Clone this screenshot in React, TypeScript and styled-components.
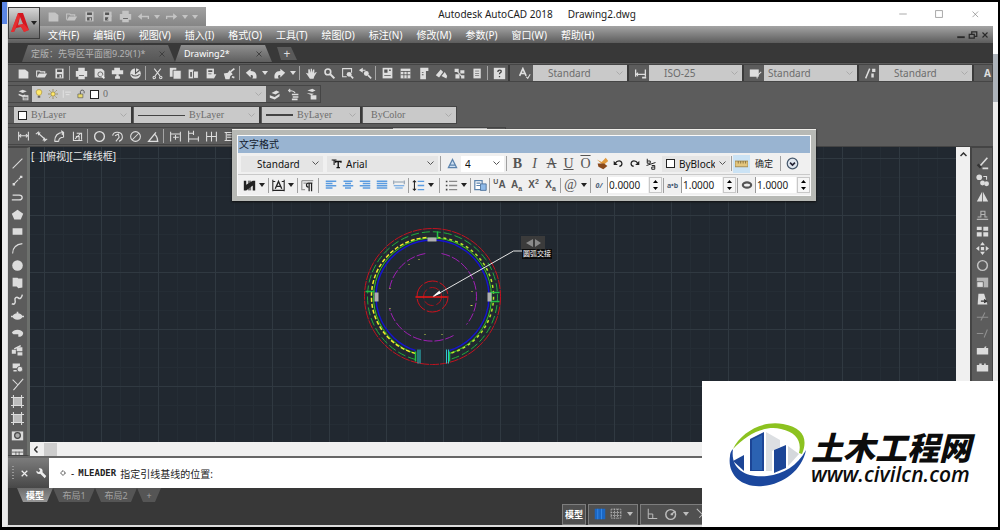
import React from 'react';
import styled, { createGlobalStyle, css } from 'styled-components';

const GlobalStyle = createGlobalStyle`
  * { box-sizing: border-box; }
  body { margin: 0; background: #000; font-family: "Noto Sans", "Noto Sans CJK SC", sans-serif; font-size: 10px; }
  button, input, select { font: inherit; color: inherit; margin: 0; padding: 0; border: 0; background: none; }
  h1, h2 { margin: 0; font-weight: 400; }
`;

/* ---------- icons ---------- */
const S = { fill: 'none', stroke: 'currentColor', strokeWidth: 1.3 } as const;
const F = { fill: 'currentColor' } as const;
const H = { fill: '#555' } as const;

const glyphs: Record<string, React.ReactNode> = {
  new: <path {...F} d="M2 3h8l4 3v8H2z" />,
  open: <><path {...S} d="M2 12V5h4l1 1h5v2" /><path {...F} d="M2 13l3-5h10l-3 5z" /></>,
  save: <><path {...F} d="M3 2h10v12H3z" /><path {...H} d="M5 3h6v3H5zM5 9h6v4H5z" /><path {...F} d="M8 10h2v3H8z" /></>,
  saveAs: <><path {...F} d="M3 2h10v12H3z" /><path {...H} d="M5 3h5v3H5zM5 9h4v4H5z" /><path {...S} d="M8 12l5-5" /></>,
  print: <><path {...F} d="M4 1h8v4H4zM1 5h14v7h-3v3H4v-3H1z" /><path {...H} d="M5 10h6v1H5z" /></>,
  preview: <><path {...F} d="M2 2h9l3 3v8H2z" /><circle cx="9" cy="9" r="3" fill="#ddd" stroke="#555" /><path d="M11 11l3 3" stroke="#eee" strokeWidth="2" /></>,
  publish: <><path {...F} d="M4 1h7v3h4v5H1V4h3z" /><path {...S} d="M8 9v5M5 13h6" strokeWidth="3" /></>,
  globe: <><circle {...F} cx="8" cy="8" r="6.500" /><path d="M8 1v7l5-4M3 9c3 3 6 3 10 0" stroke="#555" fill="none" strokeWidth="1.3" /></>,
  cut: <><path {...S} d="M4 2l7 9M12 2L5 11" /><circle {...S} cx="4" cy="13" r="1.5" /><circle {...S} cx="12" cy="13" r="1.5" /></>,
  copy: <><path {...F} d="M1 1h8v11H1z" /><path d="M5 4h10v11H5z" fill="currentColor" stroke="#555" /></>,
  paste: <><path {...F} d="M2 3h6v11H2z" /><path d="M8 5h6v9H8z" fill="currentColor" stroke="#555" /><path {...H} d="M4 6h2v6H4z" /></>,
  pasteSpec: <><path {...F} d="M2 2h9v12H2z" /><path {...H} d="M4 4h5v2H4zM4 8h4v1H4z" /><path {...F} d="M8 9h6l-3 5z" /></>,
  brush: <><path {...F} d="M1 8l5-1 2-3 4 5-3 2-1 4H3z" /><path {...S} d="M9 6l5-4M11 12l3 1" strokeWidth="2.2" /></>,
  undo: <path {...F} d="M1 7l6-5v3c6 0 8 4 7 9H9c2-3 0-5-2-4v3z" />,
  redo: <path {...F} d="M15 7L9 2v3c-6 0-8 4-7 9h5c-2-3 0-5 2-4v3z" />,
  undoThin: <><path {...S} d="M3 8c3-5 9-5 10 0 0 3-2 4-4 4" strokeWidth="1.800" /><path {...F} d="M1 4v6h6z" /></>,
  redoThin: <><path {...S} d="M13 8c-3-5-9-5-10 0 0 3 2 4 4 4" strokeWidth="1.800" /><path {...F} d="M15 4v6H9z" /></>,
  arrowL: <><path {...S} d="M4 8h10v3" strokeWidth="1.600" /><path {...F} d="M1 8l5-4v8z" /></>,
  arrowR: <><path {...S} d="M12 8H2v3" strokeWidth="1.600" /><path {...F} d="M15 8l-5-4v8z" /></>,
  pan: <path {...F} d="M1 7l3 1V3l1.500-.5L7 7V2h1.500l.5 5 1-4h1.500v5l2-2 1 .5-3 5-1 3H6z" />,
  zoom: <><circle {...S} cx="6" cy="6" r="3.500" strokeWidth="2" /><path {...S} d="M9 9l5 5" strokeWidth="2.500" /></>,
  zoomWin: <><path {...S} d="M13 7V2H2v10h5" /><circle {...F} cx="10" cy="9" r="3" /><path {...S} d="M12 11l3 3" strokeWidth="2" /></>,
  zoomPrev: <><path {...S} d="M1 4h7M1 4l3-2v4z" /><circle {...F} cx="9" cy="8" r="3" /><path {...S} d="M11 10l4 4" strokeWidth="2" /></>,
  props: <><path {...F} d="M2 1h12v13H2z" /><path {...H} d="M4 3h4v4H4zM10 3h2v2h-2zM4 10h8v1H4z" /></>,
  dcenter: <><path {...F} d="M2 2h12v12H2z" /><path stroke="#555" d="M2 5.500h12M6 5v9M10 5v9M2 9.500h12" /></>,
  palettes: <><path {...F} d="M4 1h10v4h-3v10H4z" /><path {...H} d="M6 6h2v1H6zM6 9h2v1H6z" /></>,
  sheets: <><path {...F} d="M1 10l6-7 3 3-5 7zM8 11l4-5 3 5-1 3z" /></>,
  markup: <><path {...F} d="M2 2h5v4H2zM9 4h5v4H9zM3 9h5v5H3zM10 10h4v4h-4z" /><path {...S} d="M5 5l6 7" /></>,
  calc: <><path {...F} d="M3 2h9v12H3z" /><path stroke="#777" d="M5 5h5M5 8h5M5 10.500h5" /></>,
  help: <><path {...F} d="M1 1h14v14H1z" /><path d="M6 6c0-3 5-3 4 0-.5 1-2 1-2 3M8 11v1.500" stroke="#444" strokeWidth="1.600" fill="none" /></>,
  textStyle: <><path {...S} d="M2 11L6 2l4 9M4 8h4" strokeWidth="2" /><path {...S} d="M10 12l2 2 3-5" /></>,
  dimStyle: <><path {...S} d="M2 3v9M14 3v9M2 9h12" strokeWidth="1.600" /><path {...F} d="M5 6v6L2 9zM10 12h5v2h-5z" /></>,
  tableStyle: <><path {...F} d="M1 3h11v9H1z" /><path {...S} d="M10 11l5-5M10 8v6" /></>,
  leaderStyle: <><path {...S} d="M2 14L7 2" strokeWidth="1.800" /><path {...F} d="M10 2h4v4h-4zM9 8h3v5H9z" /></>,
  layers: <><path {...F} d="M2 4l5-2 5 2-5 2zM2 7l5 2 3-1v2l-3 1-5-2zM7 9h7v6H7z" /><path stroke="#555" d="M8 11.500h5M8 13.500h5" /></>,
  layerCur: <><path {...F} d="M3 6l6-3 4 2-5 3zM1 9l6 2 6-4v3l-6 4-6-2z" /></>,
  layerPrev: <><path {...F} d="M6 7h8v2H6zM7 10h7v2H7zM6 13h7v2H6z" /><path {...S} d="M10 6C8 3 6 3 2 3M4 1L2 3l2 2" /></>,
  layerState: <><path {...F} d="M3 3l6-2 4 2-4 2zM2 6l9 1-3 2zM7 9h7v5H7z" /></>,
  dLinear: <><path {...S} d="M2 2v11M14 2v11M3 7h10" /><path {...S} d="M5 5L3 7l2 2M11 5l2 2-2 2" /></>,
  dAligned: <><path {...S} d="M1 5l4-3M11 14l4-3M4 4l9 8" /><path {...F} d="M3 3h4L4 7zM13 13h-4l3-4z" /></>,
  dArc: <><path {...S} d="M2 14C2 7 6 3 13 3M7 14c0-3 2-5 6-5M10 1l3 2-2 3M13 3v6M2 14h5" /></>,
  dOrd: <><path {...S} d="M3 2v11h11M5 11l7-7M7 4h6v8M6 8h4v5" /></>,
  circle: <circle {...S} cx="8" cy="8" r="6" strokeWidth="1.700" />,
  dJog: <><path {...S} d="M2 7c1-6 12-6 12 2 0 2-1 4-4 5M5 7l4-2 1 4-4 5" /></>,
  dDia: <><circle {...S} cx="8" cy="8" r="6" /><path {...S} d="M4 12l8-8" /></>,
  dAng: <><path {...S} d="M14 14H2L11 3M9 5c3 2 4 5 4 9" strokeWidth="1.600" /></>,
  dQuick: <><path {...S} d="M2 2v3h12V2M2 5v9M14 5v9M5 9h7M8 6v6" /></>,
  dBase: <><path {...S} d="M2 1v14M8 1v5M14 8v6M2 4h6M2 11h12" /></>,
  dCont: <><path {...S} d="M2 2v12M8 2v12M14 2v12M2 8h12" /></>,
  dSpace: <><path {...S} d="M2 3h12M2 13h12M4 3v10M12 3v10M5 6h6M5 9h6" /></>,
  line: <path {...S} d="M2 14L14 2" />,
  xline: <><path {...S} d="M3 13L13 3" strokeDasharray="8 1" /><path {...F} d="M2 11h3v3H2zM11 2h3v3h-3z" /></>,
  pline: <path {...S} d="M2 5h8c5 0 5 6 0 6H1" strokeWidth="1.600" />,
  polygon: <path {...F} d="M8 2l7 5-3 7H4L1 7z" />,
  rect: <path {...F} d="M2 4h12v8H2z" />,
  arc: <path {...S} d="M2 14C2 8 6 3 14 2" />,
  disc: <circle {...F} cx="8" cy="8" r="6.500" />,
  cloud: <path {...F} d="M2 2h6l1 1h5v11l-5 1-2-2H2z" />,
  spline: <path {...S} d="M1 13c3 2 5-1 4-4s2-5 4-3 4 0 5-4" strokeWidth="1.800" />,
  ellipse: <><ellipse {...F} cx="8" cy="8" rx="6" ry="4" /><path {...F} d="M0 7h3v2H0zM13 7h3v2h-3zM7 2h2v3H7z" /></>,
  ellArc: <path {...F} d="M1 7c2-5 12-5 14 0 0 4-3 5-6 5V9H3z" />,
  insert: <><path {...F} d="M7 4h7v5H7zM8 10h6v4H8zM1 7h5v5H1z" /><path {...S} d="M4 6l8-4" strokeWidth="2" /></>,
  block: <><path {...F} d="M2 3h9v6H2zM3 11h4v2H3z" /><circle cx="11" cy="10" r="3.500" fill="currentColor" stroke="#555" /></>,
  point: <path {...S} d="M2 2l6 6M15 1L3 15" />,
  hatch: <><path {...F} d="M3 3h10v10H3z" opacity=".75" /><path {...S} d="M3 0v16M13 0v16M0 3h16M0 13h16" /></>,
  region: <><path {...F} d="M1 3h14v11H1z" /><circle cx="8" cy="8" r="3.500" fill="#aaa" stroke="#444" strokeWidth="1.500" /></>,
  table: <><path {...F} d="M1 4h14v11H1z" /><path stroke="#555" d="M1 7.500h14M6 7v8M10 7v8" /></>,
  erase: <><path {...S} d="M5 11L14 1M8 14h7" strokeWidth="2" /><path d="M2 9l4 4" stroke="#333" strokeWidth="3" /></>,
  mCopy: <><circle {...F} cx="4" cy="4" r="3.500" /><circle {...F} cx="8" cy="11" r="3" /><circle {...F} cx="13" cy="12" r="3" /><path {...S} d="M9 3h4v4" /></>,
  mirror: <path {...F} d="M7.500 1v12H1zM8.500 1v12H15z" />,
  offset: <path {...S} opacity=".7" d="M1 14h14M2 11h4V4h5v7h3M6 8h5" />,
  array: <path {...F} d="M1 2h6v4H1zM9 2h6v5H9zM1 9h6v5H1zM9 9h6v5H9z" />,
  move: <path {...F} d="M8 0l3 4H5zM8 16l3-4H5zM0 8l4-3v6zM16 8l-4-3v6zM6 6h4v4H6z" />,
  rotate: <circle {...S} cx="8" cy="8" r="6" strokeWidth="1.800" opacity=".8" />,
  scale: <><path {...F} d="M1 2h14v12H1z" opacity=".7" /><path {...F} stroke="#555" d="M1 7h8v7H1z" /></>,
  stretch: <><path {...F} d="M3 1h7l4 13H2z" /><path d="M6 10h7M10 8l3 2-3 2" stroke="#333" fill="none" strokeWidth="1.500" /></>,
  trim: <path {...S} opacity=".4" d="M1 9h14M6 13l5-10" />,
  extend: <path {...S} opacity=".4" d="M1 8h8M10 13l4-10" />,
  breakAt: <path {...F} d="M1 5h9l1-2h2l-1 2h3v8H1z" />,
  breakIt: <path {...F} d="M1 5h3V3h3v2h3V3h2v2h3v8H1z" />,
  wrench: <path {...F} d="M2 5l3 2 2-2-2-3c3-1 6 1 5 5l5 5-2 3-6-6C4 10 1 8 2 5z" />,
  gear: <><circle {...S} cx="8" cy="8" r="4" strokeDasharray="2 1" strokeWidth="2" /></>,
  close: <path {...S} d="M3 3l10 10M13 3L3 13" strokeWidth="2.200" />,
  thinX: <path {...S} d="M4 4l9 9M13 4l-9 9" strokeWidth="1" />,
  tabX: <path d="M3 3l10 10M13 3L3 13" stroke="#3c3c3c" strokeWidth="1.800" />,
  minimize: <path {...S} d="M2 8h12" strokeWidth="1" />,
  maximize: <path {...S} d="M2.500 2.500h11v11h-11z" strokeWidth="1" />,
  docMin: <path {...F} d="M2 10h12v3H2z" />,
  docRestore: <path {...S} d="M2 7h8v6H2zM6 7V3h8v7h-4" strokeWidth="2" />,
  bulb: <><path d="M8 1c6 0 5 6 2 9H6C3 7 2 1 8 1z" fill="#ffe96b" stroke="#a08420" /><path d="M6 11h4v3H6z" fill="#666" /></>,
  sun: <><circle cx="8" cy="8" r="3.500" fill="#ffe96b" stroke="#7b6a2a" /><path d="M8 0v3M8 13v3M0 8h3M13 8h3M2 2l2 2M12 12l2 2M2 14l2-2M12 4l2-2" stroke="#7b6a2a" /></>,
  freeze: <path d="M2 2v12M5 5h9M6 9h6" stroke="#e4e4e4" fill="none" strokeWidth="1.500" />,
  lock: <><path d="M3 8h8v6H3z" fill="#e8d96a" stroke="#555" /><path d="M7 8V4c0-3 6-3 6 0v3" stroke="#555" fill="none" strokeWidth="1.500" /></>,
  tt: <><path {...S} d="M1 3h7M4.500 3v7" strokeWidth="1.500" /><path {...S} d="M6 5h9M10.500 5v9M8 14h5M6.500 4v3M14.500 4v3" strokeWidth="2" /></>,
  annot: <path d="M8 3l5 10H3zM5 10h6" fill="#cfe0f2" stroke="#5b83ad" strokeWidth="1.600" />,
  stamp: <><path d="M1 3l6 3 5-5 3 4-6 5z" fill="#e09a3e" /><path d="M2 8h8l4 3-5 4-6-3z" fill="#8a4a1c" /></>,
  stack: <><path {...S} d="M3 1v6h4V4H3M2 10L14 6M9 10h4v5H9v-3h4" /></>,
  ruler: <><path d="M0 5h16v7H0z" fill="#e3c67e" stroke="#9b8144" /><path d="M4 5v3M7 5v3M10 5v3M13 5v3" stroke="#7a6432" /></>,
  more: <><circle cx="8" cy="8" r="6.500" fill="#dfe6ee" stroke="#46586c" strokeWidth="1.500" /><path d="M5 7l3 3 3-3" stroke="#223" fill="none" strokeWidth="2" /></>,
  columns: <><path {...F} d="M1 2h3v12H1zM12 2h3v12h-3zM4 7l8-5v6l-8 6z" /><path {...F} opacity=".6" d="M6 2h4v12H6z" /></>,
  aBox: <><path {...S} d="M1 1v14M15 1v14M1 3h3M12 3h3M1 14h14" /><path {...S} d="M4 12L8 3l4 9M6 9h4" strokeWidth="1.600" /></>,
  para: <><path d="M1 2h14M1 2v11h4M3 5h4" stroke="#999" fill="none" strokeWidth="1.500" /><path {...S} d="M14 5H9c-3 0-3 5 0 5M10 5v10M13 5v10" strokeWidth="1.500" /></>,
  alignL: <path d="M1 3h14M1 6h9M1 9h14M1 12h9" stroke="#5a9be0" strokeWidth="2" />,
  alignC: <path d="M2 3h12M4 6h8M1 9h14M4 12h8" stroke="#5a9be0" strokeWidth="2" />,
  alignR: <path d="M1 3h14M5 6h10M1 9h14M5 12h10" stroke="#5a9be0" strokeWidth="2" />,
  alignJ: <path d="M1 3h14M1 6h14M1 9h14M1 12h14" stroke="#5a9be0" strokeWidth="1.800" />,
  distrib: <><path d="M1 2v5M15 2v5M2 4h12" stroke="#8899aa" strokeWidth="1.400" /><path d="M1 9h14M3 12h10" stroke="#5a9be0" strokeWidth="1.600" /></>,
  spacing: <><path {...S} d="M3 2v12M1 4l2-2 2 2M1 12l2 2 2-2" /><path d="M7 3h8M7 8h8M7 13h8" stroke="#5a9be0" strokeWidth="1.600" /></>,
  numbering: <><path d="M1 3h2M1 8h2M1 13h2" stroke="#444" strokeWidth="2" /><path d="M5 3h10M5 8h10M5 13h10" stroke="#8a8a8a" strokeWidth="1.600" /></>,
  field: <><path d="M1 2h9v11H1zM3 5h5M3 8h5" fill="#fff" stroke="#5b83ad" strokeWidth="1.500" /><path d="M8 6h7v8H8z" fill="#8db9e8" stroke="#456a92" /></>,
  widthF: <ellipse cx="8" cy="8" rx="5.500" ry="3.500" fill="none" stroke="#555" strokeWidth="3" />,
  grid: <><path d="M1 1h14v14H1z" fill="#1b67c4" /><path d="M5 1v14M10 1v14" stroke="#3f92f0" /></>,
  snap: <path {...S} strokeDasharray="2 1" strokeWidth="1" d="M1.500 1.500h13v12h-13zM6 1v13M10 1v13M1 6h14M1 10h14" />,
  ortho: <path {...S} d="M3 1v13h12M3 8h6v6" />,
  polar: <><circle {...S} cx="7" cy="8" r="6" strokeWidth="1.800" /><path {...S} d="M7 8l6-4M7 8h3" strokeWidth="1.800" /></>,
  iso: <path {...S} d="M1 1l14 14M9 0v16M14 2L4 12" />,
};

const Svg = styled.svg`display: block; flex: none;`;
const Icon = ({ name, size = 14 }: { name: string; size?: number }) => (
  <Svg width={size} height={size} viewBox="0 0 16 16" aria-hidden="true">{glyphs[name]}</Svg>
);
const Tri = styled.span`
  width: 0; height: 0; flex: none;
  border: 3px solid transparent; border-top: 4px solid currentColor; border-bottom: 0;
`;

/* ---------- frame ---------- */
const Screen = styled.div`
  position: relative; display: flex; min-height: 100vh;
  border: 2px solid #000; border-bottom-width: 3px; overflow: hidden;
`;
const Edge = styled.div<{ $side: 'left' | 'right' }>`
  flex: none;
  ${p => p.$side === 'left'
    ? css`width: 5px; background: linear-gradient(#5b86e5 22px, #ebebeb 22px);`
    : css`width: 5px; background: linear-gradient(#fff 52px, #adb3ba 52px 100px, #ececec 100px);`}
`;
const Win = styled.div`
  flex: 1; min-width: 0; display: flex; flex-direction: column;
  background: #5c5c5c; border-left: 1px solid #ddd; border-bottom: 2px solid #ddd; position: relative;
`;
const TitleBar = styled.header`
  height: 24px; background: #fff; display: flex; align-items: center; position: relative;
`;
const Title = styled.h1`
  flex: 1; display: flex; justify-content: center; gap: 15px; padding-right: 28px;
  font-size: 10px; line-height: 24px; color: #1c1c1c; white-space: pre;
`;
const QuickBar = styled.div`
  width: 167px; height: 19px; margin: 5px 0 0 31px; padding-left: 5px; align-self: flex-start;
  display: flex; align-items: center; background: linear-gradient(#a2a2a2, #858585); color: #c4c4c4;
`;
const WinBtns = styled.div`display: flex; gap: 22px; color: #777; margin-right: 11px;`;
const AppButton = styled.button`
  position: absolute; left: 0; top: 5px; width: 32px; height: 32px; z-index: 2;
  border: 1px solid #3c3c3c; background: linear-gradient(#d6d6d6, #6a6a6a);
  display: flex; align-items: center; color: #222;
`;
const MenuBar = styled.nav`
  height: 17px; padding-left: 40px; display: flex; align-items: center; gap: 14px;
  background: linear-gradient(#a4a4a4, #5c5c5c); color: #fff;
`;
const MenuItem = styled.button`line-height: 16px; white-space: nowrap; font-size: 10px;`;
const DocBtns = styled.div`margin-left: auto; display: flex; color: #2a2a2a; padding-right: 2px;`;

const TabStrip = styled.div`
  height: 20px; background: #383838; border-bottom: 1px solid #333; display: flex; align-items: flex-end; padding-left: 14px;
`;
const DocTab = styled.button<{ $active?: boolean; $w: number }>`
  width: ${p => p.$w}px; height: 17px; padding: 0 9px; display: flex; align-items: center; justify-content: space-between;
  font-size: 9px; white-space: nowrap;
  color: ${p => (p.$active ? '#fff' : '#b4b4b4')};
  background: ${p => (p.$active ? 'linear-gradient(#8f8f8f, #5f5f5f)' : 'linear-gradient(#6a6a6a, #565656)')};
  clip-path: polygon(0 100%, 6px 0, calc(100% - 7px) 0, 100% 100%);
`;
const PlusTab = styled.button`
  width: 20px; height: 13px; margin: 0 0 2px 5px; background: #5a5a5a; color: #ddd; font-size: 12px; line-height: 12px;
  clip-path: polygon(0 0, 14px 0, 100% 100%, 4px 100%);
`;

/* ---------- toolbars ---------- */
const Toolbars = styled.div`display: flex; flex-direction: column; gap: 3px; padding: 1px 0;`;
const Toolbar = styled.div<{ $fill?: boolean }>`
  height: 18px; display: flex; align-items: center; color: #dedede; overflow: hidden;
  border: 1px solid #454545; border-left: 0; padding-left: 6px;
  ${p => (p.$fill ? '' : 'align-self: flex-start;')}
`;
const ToolBtn = styled.button<{ $w?: number }>`
  width: ${p => p.$w ?? 18}px; height: 16px; flex: none; display: flex; align-items: center; justify-content: center;
`;
const Rule = styled.span`width: 1px; height: 14px; margin: 0 2px 0 1px; background: #a5a5a5; flex: none;`;
const Divider = styled.span`width: 2px; height: 18px; background: #3a3a3a; flex: none;`;
const Spacer = styled.span<{ $w: number }>`width: ${p => p.$w}px; flex: none;`;
const Combo = styled.label<{ $w: number; $pad?: number; $tone?: 'dim' | 'light' | 'white'; $serif?: boolean }>`
  width: ${p => p.$w}px; height: 16px; flex: none; display: flex; align-items: center; gap: 4px;
  padding: 0 4px 0 ${p => p.$pad ?? 4}px;
  background: ${p => ({ dim: '#c9c9c9', light: '#e5e5e5', white: '#fff' }[p.$tone ?? 'dim'])};
  color: ${p => (p.$tone && p.$tone !== 'dim' ? '#111' : '#6c6c6c')};
  font-family: ${p => (p.$serif ? '"Liberation Serif", serif' : 'inherit')};
  select { flex: 1; min-width: 0; appearance: none; outline: 0; line-height: 14px; }
`;
const Swatch = styled.span`width: 9px; height: 9px; border: 1px solid #222; background: #fff; flex: none;`;
const Stroke = styled.span<{ $w: number; $h: number }>`width: ${p => p.$w}px; height: ${p => p.$h}px; background: #444; flex: none;`;
const Chevron = ({ color = '#aaa' }: { color?: string }) => (
  <Svg width="7" height="5" viewBox="0 0 7 5" aria-hidden="true"><path d="M.5.5l3 3 3-3" fill="none" stroke={color} /></Svg>
);
interface ComboProps { label: string; value: string; w: number; pad?: number; tone?: 'dim' | 'light' | 'white'; serif?: boolean; children?: React.ReactNode }
const ComboBox = ({ label, value, w, pad, tone, serif, children }: ComboProps) => (
  <Combo $w={w} $pad={pad} $tone={tone} $serif={serif}>
    {children}
    <select aria-label={label} defaultValue={value}><option>{value}</option></select>
    <Chevron color={tone ? '#555' : '#aaa'} />
  </Combo>
);
/* A run of tools: "|" draws a rule, "v" a small menu arrow. */
const Tools = ({ items, w = 18 }: { items: string[]; w?: number }) => (
  <>
    {items.map((n, i) =>
      n === '|' ? <Rule key={i} />
        : n === 'v' ? <ToolBtn key={i} $w={10} aria-label="more"><Tri /></ToolBtn>
          : <ToolBtn key={i} $w={w} aria-label={n}><Icon name={n} size={13} /></ToolBtn>)}
  </>
);

/* ---------- workspace ---------- */
const Work = styled.main`flex: 1; min-height: 0; display: flex; border-top: 1px solid #444;`;
const SideTools = styled.div<{ $right?: boolean }>`
  width: ${p => (p.$right ? 23 : 22)}px; flex: none; height: 100%; overflow: hidden; padding-top: 7px;
  display: flex; flex-direction: column; align-items: center; color: #dcdcdc;
  border: 1px solid #444; ${p => (p.$right ? 'border-left: 2px solid #444;' : 'border-right: 3px solid #6d706d; border-left: 0;')}
  button { height: 17px; }
`;
const SideWrap = styled.div`flex: none; height: 0; min-height: 100%;`;
const Center = styled.div`flex: 1; min-width: 0; display: flex; flex-direction: column;`;
const CanvasRow = styled.div`flex: 1; display: flex; min-height: 0;`;
const Canvas = styled.div`
  flex: 1; position: relative; background-color: #212830; color: #e8e8e8; overflow: hidden;
  background-image:
    linear-gradient(90deg, #303941 1px, transparent 1px), linear-gradient(#303941 1px, transparent 1px),
    linear-gradient(90deg, #252d35 1px, transparent 1px), linear-gradient(#252d35 1px, transparent 1px);
  background-size: 57px 57px, 57px 57px, 19px 19px, 19px 19px;
  background-position: 14px 0, 0 11px, 14px 0, 0 11px;
`;
const ViewLabel = styled.div`position: absolute; left: 1px; top: 2px; font-size: 10px; line-height: 14px; white-space: pre;`;
const Drawing = styled.svg`position: absolute; inset: 0; width: 100%; height: 100%;`;
const Marker = styled.div`
  position: absolute; left: 491px; top: 89px; width: 24px; height: 13px; background: #3b3b3b; color: #8a8a8a;
  display: flex; align-items: center; justify-content: center;
`;
const LeaderText = styled.div`
  position: absolute; left: 492px; top: 102px; padding: 0 1px; background: #0c0c0c; color: #fff;
  font-size: 7px; line-height: 10px; white-space: nowrap;
`;
const VScroll = styled.div`
  width: 14px; flex: none; background: #f0f0f0; color: #333; display: flex; justify-content: center; align-items: flex-start; padding-top: 5px;
`;
const HScroll = styled.div`height: 14px; background: #f0f0f0; color: #333; display: flex; align-items: center; padding-left: 4px; gap: 6px;`;
const Thumb = styled.span`width: 13px; height: 13px; background: #cdcdcd;`;

const CommandBar = styled.div`height: 32px; border-top: 2px solid #666; display: flex; background: #fff;`;
const CommandGrip = styled.div`
  width: 41px; flex: none; display: flex; align-items: center; gap: 4px; padding-left: 4px; color: #eee;
  background: linear-gradient(#7c7c7c, #474747);
`;
const Dots = styled.span`width: 2px; height: 14px; background: repeating-linear-gradient(#999 0 1px, transparent 1px 3px);`;
const CommandLine = styled.label`flex: 1; display: flex; align-items: center; gap: 4px; padding-left: 10px; color: #222; white-space: nowrap;`;
const CommandName = styled.b`font-family: "DejaVu Sans Mono", monospace; font-size: 9px;`;
const CommandInput = styled.input`flex: 1; min-width: 0; outline: 0;`;

const Footer = styled.footer`background: #383838; display: flex; flex-direction: column; height: 37px;`;
const LayoutTabs = styled.div`display: flex; padding-left: 9px; height: 15px;`;
const LayoutTab = styled.button<{ $active?: boolean; $w?: number }>`
  width: ${p => p.$w ?? 42}px; height: 14px; font-size: 9px; line-height: 13px; white-space: nowrap;
  font-weight: ${p => (p.$active ? 700 : 400)};
  color: ${p => (p.$active ? '#fff' : '#a2a2a2')};
  background: ${p => (p.$active ? 'linear-gradient(#6c6c6c, #969696)' : '#555')};
  clip-path: polygon(0 0, 100% 0, calc(100% - 6px) 100%, 6px 100%);
`;
const Status = styled.div`width: 431px; height: 22px; margin: 1px 0 0 auto; display: flex; gap: 2px; color: #bdbdbd;`;
const StatusGroup = styled.div<{ $w: number }>`
  width: ${p => p.$w}px; border: 1px solid #7d7d7d; background: #505050; display: flex; align-items: center; justify-content: space-evenly;
  button { display: flex; align-items: center; font-size: 9px; font-weight: 700; white-space: nowrap; }
`;
const ModelBtn = styled.button`color: #fff;`;

/* ---------- text formatting window ---------- */
const Dialog = styled.section`
  position: absolute; left: 224px; top: 127px; width: 584px; padding: 5px; z-index: 3; background: #b7b9b5;
  border-top: 1px solid #efeeea; box-shadow: 0 1px 2px #111; color: #222;
`;
const DialogBody = styled.div`background: #f0f0f0; border: 1px solid #fafafa;`;
const DialogTitle = styled.h2`height: 17px; padding-left: 1px; background: #99b4d1; font-size: 10px; line-height: 16px; color: #13202e;`;
const DialogRow = styled.div`
  height: 21px; display: flex; align-items: center; padding-left: 3px;
  & + & { border-top: 1px solid #c9c9c9; }
`;
const Bar = styled.span<{ $m?: number }>`width: 1px; height: 15px; background: #a0a0a0; flex: none; margin: 0 ${p => p.$m ?? 3}px;`;
const Letter = styled.button<{ $b?: boolean; $i?: boolean; $line?: string; $w?: number }>`
  width: ${p => p.$w ?? 17}px; flex: none; font-family: "Liberation Serif", serif; font-size: 14px; line-height: 16px; color: #555;
  font-weight: ${p => (p.$b ? 700 : 400)}; font-style: ${p => (p.$i ? 'italic' : 'normal')};
  text-decoration: ${p => p.$line ?? 'none'};
`;
const ScriptBtn = styled.button`
  width: 17px; flex: none; font-family: "Liberation Sans", sans-serif; font-size: 10px; line-height: 16px; color: #555; font-weight: 700;
  sup, sub { font-size: 7px; line-height: 0; }
`;
const Toggle = styled.button`width: 17px; height: 18px; background: #cbe3f5; display: flex; align-items: center; justify-content: center; flex: none;`;
const OkBtn = styled.button`width: 28px; font-size: 9px; flex: none; white-space: nowrap;`;
const Spin = styled.label<{ $w: number }>`
  width: ${p => p.$w}px; height: 18px; flex: none; display: flex; align-items: center; gap: 1px; color: #222; justify-content: flex-end;
  input { width: 41px; height: 16px; padding-left: 1px; background: #fff; border-left: 1px solid #999; outline: 0; }
`;
const Tag = styled.span`flex: 1; display: flex; justify-content: center; font-size: 7px; font-weight: 700; color: #4b5f78; white-space: nowrap;`;
const Stepper = styled.span`
  width: 13px; height: 16px; display: grid; border: 1px solid #c8c8c8; background: #f6f6f6;
  button { display: flex; align-items: center; justify-content: center; }
`;
const SpinBox = ({ label, value, w, children }: { label: string; value: string; w: number; children: React.ReactNode }) => (
  <Spin $w={w}>
    <Tag>{children}</Tag>
    <input aria-label={label} defaultValue={value} />
    <Stepper>
      <button aria-label={`${label} up`}><svg width="5" height="3"><path d="M0 3h5L2.500 0z" /></svg></button>
      <button aria-label={`${label} down`}><svg width="5" height="3"><path d="M0 0h5L2.500 3z" /></svg></button>
    </Stepper>
  </Spin>
);

/* ---------- site badge ---------- */
const Badge = styled.aside`
  position: absolute; right: -2px; bottom: -3px; width: 298px; height: 149px; z-index: 4; background: #fff; color: #0c0c0c;
  display: flex; align-items: center; padding: 3px 0 0 27px;
`;
const BadgeText = styled.div`display: flex; flex-direction: column; white-space: nowrap; font-style: italic;`;
const BadgeName = styled.strong`font-family: "Noto Sans CJK SC", sans-serif; font-weight: 900; font-size: 32px; line-height: 34px;`;
const BadgeUrl = styled.a`font-family: "Open Sans", sans-serif; font-weight: 600; font-size: 21px; line-height: 22px; color: inherit; text-decoration: none;`;

const menus = ['文件(F)', '编辑(E)', '视图(V)', '插入(I)', '格式(O)', '工具(T)', '绘图(D)', '标注(N)', '修改(M)', '参数(P)', '窗口(W)', '帮助(H)'];
const standardTools = ['new', 'open', 'save', '|', 'print', 'preview', 'publish', 'globe', '|', 'cut', 'copy', 'paste', 'pasteSpec', 'brush', '|', 'undo', 'v', 'redo', 'v', '|', 'pan', 'zoom', 'zoomWin', 'zoomPrev', '|', 'props', 'dcenter', 'palettes', 'sheets', 'markup', 'calc', '|', 'help'];
const drawTools = ['line', 'xline', 'pline', 'polygon', 'rect', 'arc', 'disc', 'cloud', 'spline', 'ellipse', 'ellArc', 'insert', 'block', 'point', 'hatch', 'hatch', 'region', 'table'];
const modifyTools = ['erase', 'mCopy', 'mirror', 'offset', 'array', 'move', 'rotate', 'scale', 'stretch', 'trim', 'extend', 'breakAt', 'breakIt'];

const Plan = () => (
  <Drawing aria-hidden="true">
    <g transform="translate(402.500 149.500)" fill="none" strokeWidth="1">
      <circle r="68" stroke="#c4121f" strokeDasharray="9 1" />
      <path d="M-17 63A65 65 0 1 1 17 63" stroke="#1fae3c" strokeDasharray="8 3" />
      <path d="M-17 57A59 59 0 1 1 17 57" stroke="#2fc42f" />
      <path d="M-17 57A59 59 0 0 1 -5 -59" stroke="#f0ee2a" strokeWidth="1.500" strokeDasharray="4 2" />
      <path d="M5 -59A59 59 0 0 1 17 57" stroke="#b8e62a" strokeWidth="1.500" strokeDasharray="3 3" />
      <path d="M-17 54A56.500 56.500 0 1 1 17 54" stroke="#1414d0" strokeWidth="1.500" />
      <path d="M-43 -8A44 44 0 0 1 -7 -43M9 -43A44 44 0 0 1 34 28M21 39A44 44 0 0 1 -43 12" stroke="#a020b4" strokeDasharray="9 2" />
      <circle r="15.500" stroke="#d0121c" strokeDasharray="14 2" />
      <circle r="9" stroke="#b0121c" strokeDasharray="10 3" />
      <path d="M-17 .5h32" stroke="#f01414" strokeWidth="1.500" />
      <path d="M5 -65v7M-67 -5h9M58 -4h9M58 5h9M-17 55v10M17 55v10" stroke="#22c044" strokeWidth="1.500" />
      <path d="M-14.500 53v14M-12.500 53v14M14 53v14M16 53v14" stroke="#2cc8cc" />
      <path d="M-5 -59h9v4h-9zM-58 -4h4v9h-4zM55 -4h4v9h-4z" fill="#b0b0b0" />
      <path d="M-24 -32h1M-14 -37h1M-43 -8h1M38 9h2M-8 38h1M9 38h1M-43 12h1M39 -5h1" stroke="#c6d84a" />
      <path d="M1 0L81 -45.500h9" stroke="#e6e6e6" />
      <path d="M0 0l7-6 1 3z" fill="#fff" />
    </g>
  </Drawing>
);

export default function App() {
  return (
    <>
      <GlobalStyle />
      <Screen>
        <Edge $side="left" />
        <Win>
          <TitleBar>
            <AppButton aria-label="AutoCAD">
              <Svg width="22" height="26" viewBox="0 0 22 26">
                <path d="M2 22L9 3h5l6 17-5 2-3-5-5 1-2 4z" fill="#d4161f" />
                <path d="M11 7l3 7-5 1z" fill="#a9a9a9" />
                <path d="M2 22L9 3l2 4-6 15zM8 15l7-1 5 6-5 2-3-5z" fill="#ee3b3b" opacity=".65" />
              </Svg>
              <Tri />
            </AppButton>
            <QuickBar><Tools items={['new', 'open', 'save', 'saveAs', 'print', 'arrowL', 'v', 'arrowR', 'v', 'v']} /></QuickBar>
            <Title><span>Autodesk AutoCAD 2018</span><span>Drawing2.dwg</span></Title>
            <WinBtns>
              <ToolBtn $w={14} aria-label="minimize"><Icon name="minimize" size={10} /></ToolBtn>
              <ToolBtn $w={14} aria-label="maximize"><Icon name="maximize" size={10} /></ToolBtn>
              <ToolBtn $w={14} aria-label="close"><Icon name="thinX" size={10} /></ToolBtn>
            </WinBtns>
          </TitleBar>
          <MenuBar>
            {menus.map(m => <MenuItem key={m}>{m}</MenuItem>)}
            <DocBtns>
              <ToolBtn $w={12} aria-label="minimize drawing"><Icon name="docMin" size={10} /></ToolBtn>
              <ToolBtn $w={12} aria-label="restore drawing"><Icon name="docRestore" size={10} /></ToolBtn>
              <ToolBtn $w={12} aria-label="close drawing"><Icon name="close" size={8} /></ToolBtn>
            </DocBtns>
          </MenuBar>
          <TabStrip>
            <DocTab $w={153}>定版：先导区平面图9.29(1)*<Icon name="tabX" size={8} /></DocTab>
            <DocTab $w={97} $active>Drawing2*<Icon name="tabX" size={8} /></DocTab>
            <PlusTab aria-label="new drawing">+</PlusTab>
          </TabStrip>
          <Toolbars>
            <Toolbar $fill>
              <Tools items={standardTools} />
              <Divider /><Spacer $w={5} />
              <Tools items={['textStyle']} />
              <ComboBox label="text style" value="Standard" w={94} pad={15} />
              <Divider /><Spacer $w={2} /><Tools items={['dimStyle']} />
              <ComboBox label="dimension style" value="ISO-25" w={93} pad={15} />
              <Divider /><Spacer $w={2} /><Tools items={['tableStyle']} />
              <ComboBox label="table style" value="Standard" w={93} />
              <Divider /><Spacer $w={2} /><Tools items={['leaderStyle']} />
              <ComboBox label="leader style" value="Standard" w={93} pad={15} />
              <Divider /><Spacer $w={10} /><b>A</b>
            </Toolbar>
            <Toolbar>
              <Tools items={['layers']} />
              <ComboBox label="layer" value="0" w={234} pad={2} serif>
                <Icon name="bulb" size={10} /><Icon name="sun" size={10} /><Icon name="freeze" size={10} /><Icon name="lock" size={10} /><Swatch />
              </ComboBox>
              <Tools items={['layerCur', 'layerPrev', 'layerState']} />
            </Toolbar>
            <Toolbar>
              <ComboBox label="color" value="ByLayer" w={117} serif><Swatch /></ComboBox>
              <Divider /><Spacer $w={1} />
              <ComboBox label="linetype" value="ByLayer" w={125} serif><Stroke $w={47} $h={1} /></ComboBox>
              <Divider /><Spacer $w={1} />
              <ComboBox label="lineweight" value="ByLayer" w={98} serif><Stroke $w={27} $h={2} /></ComboBox>
              <Divider /><Spacer $w={1} />
              <ComboBox label="plot style" value="ByColor" w={93} pad={8} serif />
            </Toolbar>
            <Toolbar>
              <Tools items={['dLinear', 'dAligned', 'dArc', 'dOrd', '|', 'circle', 'dJog', 'dDia', 'dAng', '|', 'dQuick', 'dBase', 'dCont', 'dSpace']} />
              <Spacer $w={155} />
              <ComboBox label="dimension" value="ISO-25" w={94} />
              <Tools items={['dimStyle']} />
            </Toolbar>
          </Toolbars>
          <Work>
            <SideWrap>
              <SideTools><Tools items={drawTools} /></SideTools>
            </SideWrap>
            <Center>
              <CanvasRow>
                <Canvas>
                  <ViewLabel>[  ][俯视][二维线框]</ViewLabel>
                  <Plan />
                  <Marker>
                    <svg width="15" height="8" aria-hidden="true"><path d="M7 0v8L0 4zM9 0v8l6-4z" fill="currentColor" /></svg>
                  </Marker>
                  <LeaderText>圆弧交接</LeaderText>
                </Canvas>
                <VScroll><svg width="7" height="5" aria-hidden="true"><path d="M.5 4l3-3 3 3" fill="none" stroke="currentColor" strokeWidth="1.500" /></svg></VScroll>
              </CanvasRow>
              <HScroll>
                <svg width="4" height="7" aria-hidden="true"><path d="M3.500.5l-3 3 3 3" fill="none" stroke="currentColor" strokeWidth="1.500" /></svg>
                <Thumb />
              </HScroll>
            </Center>
            <SideWrap>
              <SideTools $right><Tools items={modifyTools} /></SideTools>
            </SideWrap>
          </Work>
          <CommandBar>
            <CommandGrip>
              <Dots />
              <ToolBtn $w={12} aria-label="close command line"><Icon name="close" size={9} /></ToolBtn>
              <ToolBtn $w={14} aria-label="customize"><Icon name="wrench" size={12} /></ToolBtn>
            </CommandGrip>
            <CommandLine>
              <Icon name="gear" size={8} />-
              <CommandName>MLEADER</CommandName>
              <span>指定引线基线的位置:</span>
              <CommandInput aria-label="command" />
            </CommandLine>
          </CommandBar>
          <Footer>
            <LayoutTabs>
              <LayoutTab $active $w={36}>模型</LayoutTab>
              <LayoutTab>布局1</LayoutTab>
              <LayoutTab>布局2</LayoutTab>
              <LayoutTab $w={24} aria-label="new layout">+</LayoutTab>
            </LayoutTabs>
            <Status>
              <StatusGroup $w={24}><ModelBtn>模型</ModelBtn></StatusGroup>
              <StatusGroup $w={50}>
                <button aria-label="grid"><Icon name="grid" size={12} /></button>
                <button aria-label="snap"><Icon name="snap" size={12} /></button>
                <Tri />
              </StatusGroup>
              <StatusGroup $w={353}>
                <ToolBtn $w={22} aria-label="ortho"><Icon name="ortho" size={12} /></ToolBtn>
                <ToolBtn $w={16} aria-label="polar"><Icon name="polar" size={13} /></ToolBtn>
                <ToolBtn $w={14} aria-label="polar angles"><Tri /></ToolBtn>
                <ToolBtn $w={18} aria-label="isoplane"><Icon name="iso" size={13} /></ToolBtn>
                <Spacer $w={281} />
              </StatusGroup>
            </Status>
          </Footer>
          <Dialog>
            <DialogBody>
              <DialogTitle>文字格式</DialogTitle>
              <DialogRow>
                <ComboBox label="style" value="Standard" w={82} pad={16} tone="light" />
                <Spacer $w={4} />
                <ComboBox label="font" value="Arial" w={111} tone="light"><Icon name="tt" size={11} /></ComboBox>
                <Bar $m={2} />
                <Tools items={['annot']} />
                <ComboBox label="height" value="4" w={43} tone="white" />
                <Bar $m={2} />
                <Letter $b>B</Letter>
                <Letter $i>I</Letter>
                <Letter $line="line-through">A</Letter>
                <Letter $line="underline">U</Letter>
                <Letter $line="overline">O</Letter>
                <Tools items={['stamp']} w={16} />
                <ToolBtn $w={16} aria-label="undo text"><Icon name="undoThin" size={11} /></ToolBtn>
                <ToolBtn $w={17} aria-label="redo text"><Icon name="redoThin" size={11} /></ToolBtn>
                <ToolBtn $w={16} aria-label="stack"><Icon name="stack" size={12} /></ToolBtn>
                <Spacer $w={3} />
                <ComboBox label="text color" value="ByBlock" w={68} tone="light"><Swatch /></ComboBox>
                <Bar $m={1} />
                <Toggle aria-label="ruler"><Icon name="ruler" size={13} /></Toggle>
                <OkBtn>确定</OkBtn>
                <Bar $m={2} />
                <ToolBtn aria-label="options"><Icon name="more" size={13} /></ToolBtn>
              </DialogRow>
              <DialogRow>
                <Tools items={['columns', 'v']} w={16} /><Bar $m={1} />
                <Tools items={['aBox', 'v']} w={16} /><Bar $m={1} />
                <Tools items={['para']} w={16} /><Bar />
                {['alignL', 'alignC', 'alignR', 'alignJ', 'distrib'].map(n => (
                  <ToolBtn key={n} $w={17} aria-label={n}><Icon name={n} size={12} /></ToolBtn>
                ))}
                <Bar $m={1} />
                <Tools items={['spacing', 'v']} w={16} /><Bar />
                <Tools items={['numbering', 'v']} w={16} /><Bar $m={1} />
                <Tools items={['field']} w={16} /><Bar $m={1} />
                <ScriptBtn><sup>U</sup>A</ScriptBtn>
                <ScriptBtn>A<sub>a</sub></ScriptBtn>
                <ScriptBtn>X<sup>2</sup></ScriptBtn>
                <ScriptBtn>X<sub>a</sub></ScriptBtn>
                <Bar $m={1} />
                <Letter $i>@</Letter><Tools items={['v']} />
                <Bar $m={1} />
                <SpinBox label="oblique" value="0.0000" w={70}><i>0/</i></SpinBox>
                <Bar $m={1} />
                <SpinBox label="tracking" value="1.0000" w={71}>a•b</SpinBox>
                <Bar $m={1} />
                <SpinBox label="width factor" value="1.0000" w={71}><Icon name="widthF" size={12} /></SpinBox>
              </DialogRow>
            </DialogBody>
          </Dialog>
        </Win>
        <Edge $side="right" />
        <Badge>
          <Svg width="82" height="68" viewBox="0 0 82 68" aria-hidden="true">
            <path d="M21 16l14-7v39H21z" fill="#1c4596" />
            <path d="M23 17l10-5v35H23z" fill="#2b62b2" />
            <path d="M37 9l14 8v7l-8 4v20h-6z" fill="#dcdfe2" />
            <path d="M45 27l12-5v23l-12 5z" fill="#1c4596" />
            <path d="M59 23l11 8-9 10-2 2z" fill="#d5d8dc" />
            <path d="M4 38l11-6v16z" fill="#1c4596" />
            <path d="M4 26C12 9 34-3 54 1c21 4 25 15 19 30l-3-1c3-12-3-21-18-24C36 2 18 11 4 26z" fill="#8cc220" />
            <path d="M1 33c0-3 1-5 3-7-3 20 13 29 34 27 17-2 30-10 39-26C73 47 55 61 34 63 13 65-2 52 1 33z" fill="#1b479d" />
          </Svg>
          <BadgeText>
            <BadgeName>土木工程网</BadgeName>
            <BadgeUrl href="#">www.civilcn.com</BadgeUrl>
          </BadgeText>
        </Badge>
      </Screen>
    </>
  );
}
